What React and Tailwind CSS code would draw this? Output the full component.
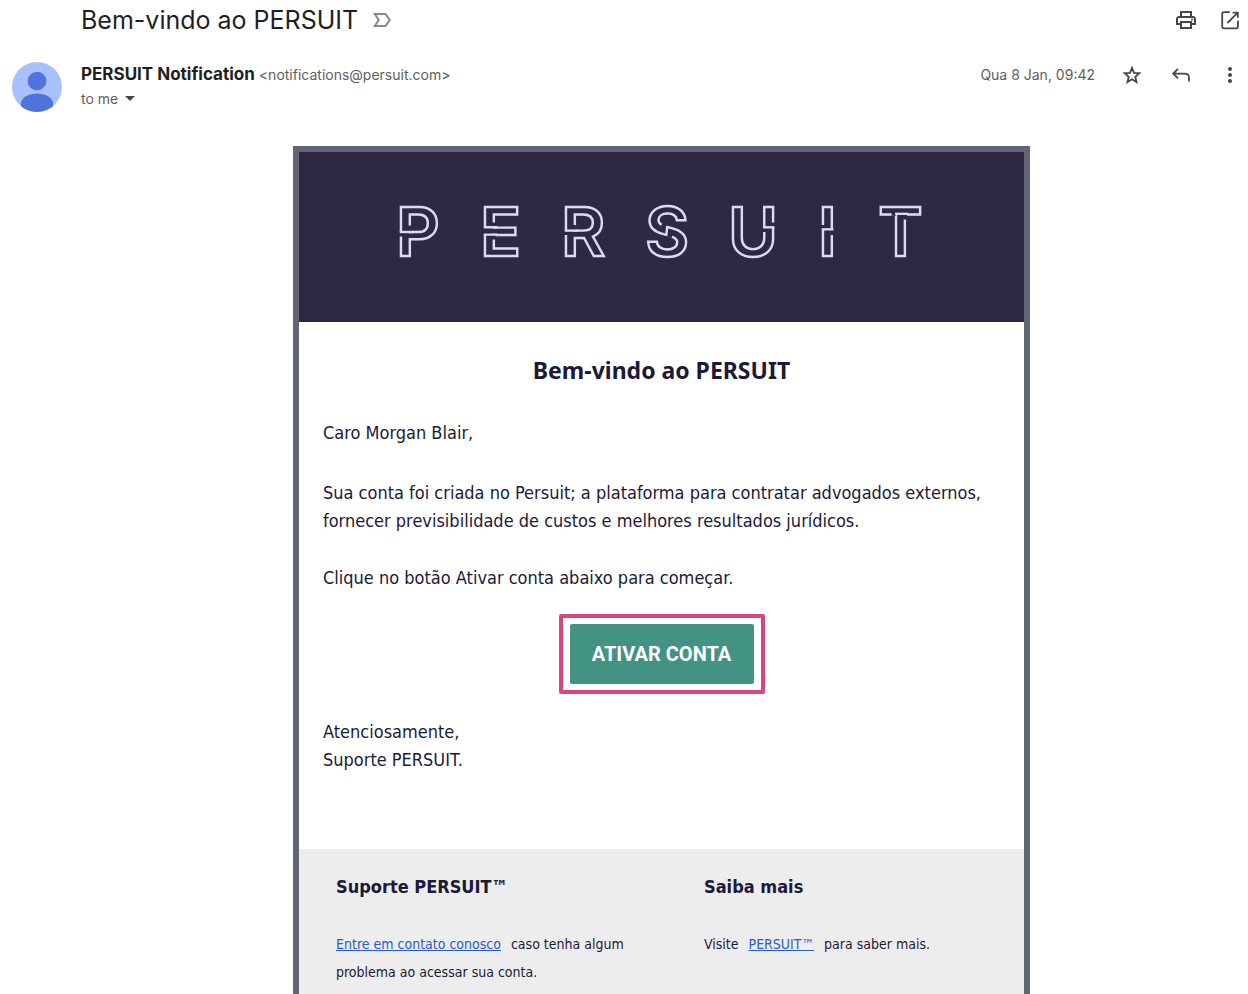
import React from 'react';
import {
  MdLabelImportantOutline,
  MdOutlineLocalPrintshop,
  MdMoreVert,
  MdArrowDropDown,
} from 'react-icons/md';

const Avatar = () => (
  <svg viewBox="0 0 50 50" className="w-[50px] h-[50px] shrink-0" aria-hidden="true">
    <clipPath id="avatar-clip">
      <circle cx="25" cy="25" r="25" />
    </clipPath>
    <g clipPath="url(#avatar-clip)">
      <rect width="50" height="50" fill="#a6c1fb" />
      <circle cx="25" cy="19" r="9.3" fill="#4f74dc" />
      <path d="M9 50V42C9 35 17 31.5 25 31.5S41 35 41 42V50Z" fill="#4f74dc" />
    </g>
  </svg>
);

const OpenIcon = () => (
  <svg viewBox="0 0 24 24" className="w-6 h-6" fill="none" stroke="currentColor" strokeWidth="1.8">
    <path d="M11.8 4.2H6Q4.2 4.2 4.2 6V18.6Q4.2 20.4 6 20.4H18.2Q20 20.4 20 18.6V12.8" />
    <path d="M14.6 4.6H19.8V9.8M19.8 4.6L9.4 15" />
  </svg>
);

const StarIcon = () => (
  <svg viewBox="0 0 24 24" className="w-6 h-6" fill="none" stroke="currentColor" strokeWidth="1.8">
    <path d="M12 4.9L14 9.8L19.4 10.3L15.3 13.8L16.5 19L12 16.2L7.5 19L8.7 13.8L4.6 10.3L10 9.8Z" />
  </svg>
);

const ReplyIcon = () => (
  <svg viewBox="0 0 24 24" className="w-6 h-6" fill="none" stroke="currentColor" strokeWidth="1.8">
    <path d="M9 5.8L4.2 10.6L9 15.4M4.2 10.6H15.5C18.3 10.6 20 12.2 20 14.8V18.6" />
  </svg>
);

// Outlined wordmark: stroked text, then small breaks and joints on each letter
const Logo = () => (
  <svg viewBox="0 0 526 90" className="w-[526px] max-w-full" fill="none" role="img" aria-label="PERSUIT">
    <text
      x="-3 81 162 246 329 419 479"
      y="70"
      stroke="#dcdaf3"
      strokeWidth="2.4"
      className="font-['Inter'] font-semibold text-[68px]"
    >
      PERSUIT
    </text>
    <g stroke="#2e2842" strokeWidth="4">
      <path d="M10.8 39.5V46M2 46V50.5" />
      <path d="M94.8 36.5V42M86 41V49M94.8 48V53.5" />
      <path d="M175.8 39V45M167 44.5V49" />
      <path d="M262.8 38.6L267.4 40.8M268.6 48.3L273.2 50.2" />
      <path d="M374.2 36.5V41M365.3 41.3V46" />
      <path d="M424 39V43M433.2 43.5V49" />
      <path d="M492.5 27.8H497M506 28V33.5" />
    </g>
    <g stroke="#dcdaf3" strokeWidth="2.4" strokeLinecap="square">
      <path d="M2 46H13" />
      <path d="M86 41.3H97M86 48.6H97" />
      <path d="M167 44.6H178" />
      <path d="M268.2 41.2L267.4 48" />
      <path d="M365.3 41.3H374.2" />
      <path d="M424 43.3H433.2" />
      <path d="M497.3 27.8H508" />
    </g>
  </svg>
);

const IconButton = ({ label, children }) => (
  <button type="button" aria-label={label} className="w-6 h-6 flex items-center justify-center text-[#444746]">
    {children}
  </button>
);

const App = () => {
  return (
    <div className="min-h-screen flex flex-col bg-white font-['Inter',sans-serif] text-[#1f1f1f]">
      {/* Subject */}
      <header className="flex items-center justify-between h-10 pl-[81px] pr-[6px]">
        <div className="flex items-center gap-3">
          <h1 className="text-[25px] leading-8">Bem-vindo ao PERSUIT</h1>
          <MdLabelImportantOutline className="w-6 h-6 text-[#8a8a8a]" />
        </div>
        <div className="flex items-center gap-5">
          <IconButton label="Print"><MdOutlineLocalPrintshop className="w-6 h-6" /></IconButton>
          <IconButton label="Open in new window"><OpenIcon /></IconButton>
        </div>
      </header>

      {/* Sender */}
      <section className="flex items-start mt-[22px] pl-3 pr-[6px]">
        <Avatar />
        <div className="flex-1 ml-[19px]">
          <div className="flex items-baseline h-6 leading-6">
            <span className="text-[17px] font-bold">PERSUIT Notification</span>
            <span className="ml-1 text-[14px] text-[#5e5e5e]">&lt;notifications@persuit.com&gt;</span>
          </div>
          <button type="button" className="flex items-center h-6 text-[14px] text-[#5e5e5e]">
            to me
            <MdArrowDropDown className="w-6 h-6 text-[#444746]" />
          </button>
        </div>
        <div className="flex items-center h-[26px] gap-[25px]">
          <time className="text-[14px] leading-6 text-[#5e5e5e]">Qua 8 Jan, 09:42</time>
          <IconButton label="Star"><StarIcon /></IconButton>
          <IconButton label="Reply"><ReplyIcon /></IconButton>
          <IconButton label="More"><MdMoreVert className="w-6 h-6" /></IconButton>
        </div>
      </section>

      {/* Message body */}
      <main className="flex-1 flex mt-[34px] pl-[81px] pr-[6px]">
        <article className="flex flex-col w-full max-w-[737px] mx-auto border-6 border-b-0 border-[#626575] font-['DejaVu_Sans_Condensed','DejaVu_Sans',sans-serif] text-[#1d1938]">
          <div className="flex items-center justify-center h-[170px] pb-3 bg-[#2e2842]">
            <Logo />
          </div>

          <div className="px-6 pt-8 pb-[75px] text-[18px] leading-7">
            <h2 className="text-center font-['Noto_Sans',sans-serif] text-[23px] leading-8 font-bold">Bem-vindo ao PERSUIT</h2>
            <p className="mt-[33px]">Caro Morgan Blair,</p>
            <p className="mt-8">
              Sua conta foi criada no Persuit; a plataforma para contratar advogados externos,
              fornecer previsibilidade de custos e melhores resultados jurídicos.
            </p>
            <p className="mt-[29px]">Clique no botão Ativar conta abaixo para começar.</p>
            <div className="flex justify-center mt-[22px]">
              <div className="border-4 border-[#db457f] rounded-[2px] px-[7px] py-[6px]">
                <button
                  type="button"
                  className="w-[184px] h-[60px] rounded-[2px] bg-[#439385] font-['Roboto',sans-serif] text-[20px] font-bold text-white"
                >
                  ATIVAR CONTA
                </button>
              </div>
            </div>
            <p className="mt-6">
              Atenciosamente,
              <br />
              Suporte PERSUIT.
            </p>
          </div>

          <footer className="flex-1 grid grid-cols-2 pt-6 pl-[37px] pr-3 gap-15 bg-[#ededed] text-[14px] leading-7">
            <section>
              <h3 className="text-[18px] font-bold">Suporte PERSUIT™</h3>
              <p className="mt-[29px]">
                <a href="#contato" className="mr-[6px] text-[#2b59cf] underline">Entre em contato conosco</a>
                {' '}caso tenha algum problema ao acessar sua conta.
              </p>
            </section>
            <section>
              <h3 className="text-[18px] font-bold">Saiba mais</h3>
              <p className="mt-[29px]">
                Visite <a href="#persuit" className="mx-[6px] text-[#2b59cf] underline">PERSUIT™</a> para saber mais.
              </p>
            </section>
          </footer>
        </article>
      </main>
    </div>
  );
};

export default App;
